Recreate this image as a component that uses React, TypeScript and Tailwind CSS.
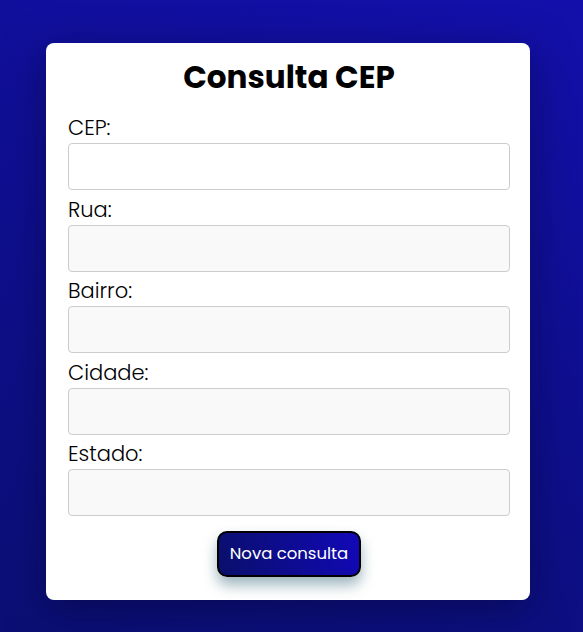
export default function App() {
  const fields = [
    { label: "CEP:", readOnly: false },
    { label: "Rua:", readOnly: true },
    { label: "Bairro:", readOnly: true },
    { label: "Cidade:", readOnly: true },
    { label: "Estado:", readOnly: true },
  ];

  return (
    <div className="min-h-[632px] w-full bg-[linear-gradient(200deg,#1310ab_0%,#0e0f8e_50%,#0b0f74_100%)] pt-[43px] font-['Poppins','Open_Sans',sans-serif]">
      <div className="ml-[46px] w-[484px] rounded-[8px] bg-white pt-[14px] pb-[23px] pl-[22px] pr-[20px] shadow-[0_10px_40px_rgba(5,5,50,0.5)]">
        <h1 className="mb-[16px] text-center text-[31px] leading-[40px] font-bold text-black">
          Consulta CEP
        </h1>
        {fields.map((f, i) => (
          <div key={`field-${i}`} className="mb-[4.5px] flex flex-col">
            <label className="h-[30px] text-[21px] leading-[30px] font-light text-black">{f.label}</label>
            <input
              type="text"
              readOnly={f.readOnly}
              className={
                f.readOnly
                  ? "h-[47px] w-[442px] rounded-[4px] border border-[#cccccc] bg-[#f9f9f9] px-2 outline-none"
                  : "h-[47px] w-[442px] rounded-[4px] border border-[#cccccc] bg-white px-2 outline-none"
              }
            />
          </div>
        ))}
        <div className="mt-[15px] flex justify-center">
          <button className="h-[46px] w-[144px] rounded-[10px] border-2 border-black bg-[linear-gradient(70deg,#0a0f6a_0%,#1208b8_100%)] text-[16.5px] text-white shadow-[0_8px_14px_rgba(10,70,90,0.4)]">
            Nova consulta
          </button>
        </div>
      </div>
    </div>
  );
}
